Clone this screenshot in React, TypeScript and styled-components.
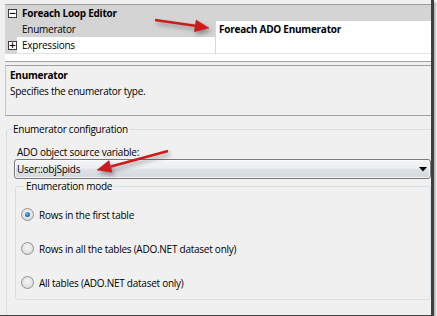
import * as React from 'react';
import styled, { createGlobalStyle, css } from 'styled-components';

const GlobalStyle = createGlobalStyle`
  html, body {
    margin: 0;
    padding: 0;
    background: #ffffff;
  }
  body {
    font-family: "Segoe UI", "Open Sans", "Liberation Sans", sans-serif;
    font-size: 10px;
    letter-spacing: -0.25px;
    color: #000000;
  }
`;

const modes = [
  { id: 'first', text: 'Rows in the first table', checked: true },
  { id: 'all', text: 'Rows in all the tables (ADO.NET dataset only)', checked: false },
  { id: 'tables', text: 'All tables (ADO.NET dataset only)', checked: false },
];

const App = () => {
  return (
    <>
      <GlobalStyle />
      <Frame>
        <PropertyGrid>
          <CategoryRow>
            <Gutter>
              <Expander>−</Expander>
            </Gutter>
            <CategoryTitle>Foreach Loop Editor</CategoryTitle>
          </CategoryRow>
          <GridRow>
            <Gutter />
            <LabelCell selected>Enumerator</LabelCell>
            <ValueCell bold>Foreach ADO Enumerator</ValueCell>
          </GridRow>
          <GridRow>
            <Gutter>
              <Expander>+</Expander>
            </Gutter>
            <LabelCell>Expressions</LabelCell>
            <ValueCell />
          </GridRow>
          <GridFiller />
        </PropertyGrid>

        <Description>
          <DescTitle>Enumerator</DescTitle>
          <DescText>Specifies the enumerator type.</DescText>
        </Description>

        <ConfigGroup>
          <ConfigLegend>Enumerator configuration</ConfigLegend>
          <FieldLabel>ADO object source variable:</FieldLabel>
          <ComboBox>
            <span>User::objSpids</span>
            <svg width="8" height="5" viewBox="0 0 8 5">
              <path d="M0 0 H8 L4 4.5 Z" fill="#000" />
            </svg>
          </ComboBox>
          <ModeGroup>
            <ModeLegend>Enumeration mode</ModeLegend>
            {modes.map((mode) => (
              <RadioRow key={mode.id}>
                <RadioDot checked={mode.checked} />
                <span>{mode.text}</span>
              </RadioRow>
            ))}
          </ModeGroup>
        </ConfigGroup>

        <Arrows width="437" height="316" viewBox="0 0 437 316">
          <g fill="#cc1b1b" stroke="#cc1b1b">
            <line x1="155" y1="20" x2="197" y2="26" strokeWidth="2.6" />
            <polygon points="209,28 196.1,20 194.3,31.8" strokeWidth="0.5" />
            <line x1="168" y1="151" x2="111" y2="166.4" strokeWidth="2.6" />
            <polygon points="97,170 112.1,172.2 109,160.6" strokeWidth="0.5" />
          </g>
        </Arrows>
      </Frame>
    </>
  );
};

const Frame = styled.div`
  position: relative;
  width: 431px;
  height: 311px;
  background: #f0f0f0;
  border-right: 3px solid #3f3f3f;
  border-bottom: 3px solid #3f3f3f;
  box-shadow: 2px 2px 2px rgba(0, 0, 0, 0.3);
  overflow: hidden;
  padding-top: 4px;
  box-sizing: content-box;
`;

const PropertyGrid = styled.div`
  margin-left: 5px;
  border-top: 1px solid #a0a0a0;
  border-bottom: 1px solid #a0a0a0;
  background: #ffffff;
`;

const rowBase = css`
  display: grid;
  grid-template-columns: 12px 198px 1fr;
  height: 16px;
  line-height: 16px;
`;

const CategoryRow = styled.div`
  display: flex;
  height: 16px;
  line-height: 16px;
  background: #d4d4d4;
`;

const GridRow = styled.div`
  ${rowBase}
`;

const Gutter = styled.div`
  width: 12px;
  background: #d4d4d4;
  display: flex;
  align-items: center;
  justify-content: center;
`;

const Expander = styled.span`
  display: flex;
  align-items: center;
  justify-content: center;
  width: 7px;
  height: 7px;
  border: 1px solid #3c3c3c;
  background: #ffffff;
  font-family: "DejaVu Sans", sans-serif;
  font-size: 9px;
  font-weight: bold;
  line-height: 7px;
  margin-left: 3px;
`;

const CategoryTitle = styled.span`
  font-weight: bold;
  padding-left: 5px;
`;

const LabelCell = styled.div<{ selected?: boolean }>`
  padding-left: 5px;
  background: ${(p) => (p.selected ? '#d4d4d4' : '#ffffff')};
  border-bottom: 1px solid #e4e4e4;
`;

const ValueCell = styled.div<{ bold?: boolean }>`
  padding-left: 3px;
  font-weight: ${(p) => (p.bold ? 'bold' : 'normal')};
  border-left: 1px solid #d8d8d8;
  border-bottom: 1px solid #e4e4e4;
  background: #ffffff;
`;

const GridFiller = styled.div`
  height: 8px;
  background: #ffffff;
`;

const Description = styled.div`
  margin: 3px 0 0 5px;
  height: 51px;
  border-top: 1px solid #a0a0a0;
  border-bottom: 1px solid #a0a0a0;
  border-left: 1px solid #c8c8c8;
  padding: 2px 0 0 4px;
  box-sizing: border-box;
`;

const DescTitle = styled.div`
  font-weight: bold;
  line-height: 15px;
`;

const DescText = styled.div`
  line-height: 17px;
`;

const ConfigGroup = styled.fieldset`
  margin: 6px 0 0 6px;
  width: 434px;
  height: 220px;
  box-sizing: border-box;
  border: 1px solid #d5dfe5;
  border-radius: 3px;
  padding: 8px 8px 0 7px;
`;

const ConfigLegend = styled.legend`
  margin-left: -3px;
  padding: 0 2px;
  line-height: 15px;
`;

const FieldLabel = styled.div`
  padding-left: 3px;
  line-height: 14px;
`;

const ComboBox = styled.div`
  display: flex;
  align-items: center;
  justify-content: space-between;
  height: 20px;
  box-sizing: border-box;
  padding: 0 3px 0 2px;
  border: 1px solid #7a7a7a;
  border-radius: 3px;
  background: linear-gradient(#f4f5f6 0%, #eceef0 45%, #dde2e7 52%, #d2d8de 100%);
  box-shadow: inset 0 0 0 1px rgba(255, 255, 255, 0.7);
`;

const ModeGroup = styled.fieldset`
  margin: 0 0 0 1px;
  height: 121px;
  box-sizing: border-box;
  border: 1px solid #d5dfe5;
  border-radius: 3px;
  padding: 13px 0 0 5px;
  display: flex;
  flex-direction: column;
  gap: 19px;
`;

const ModeLegend = styled.legend`
  margin-left: 3px;
  padding: 0 2px;
  line-height: 15px;
`;

const RadioRow = styled.label`
  display: flex;
  align-items: center;
  gap: 5px;
  height: 15px;
`;

const RadioDot = styled.span<{ checked?: boolean }>`
  position: relative;
  width: 11px;
  height: 11px;
  border-radius: 50%;
  border: 1px solid #939393;
  background: radial-gradient(circle at 50% 40%, #f6f6f6 0%, #e4e4e4 55%, #cfcfcf 100%);
  ${(p) =>
    p.checked &&
    css`
      &::after {
        content: '';
        position: absolute;
        left: 3px;
        top: 3px;
        width: 5px;
        height: 5px;
        border-radius: 50%;
        background: radial-gradient(circle at 40% 35%, #7ec4f2 0%, #1f6db4 55%, #0d3f75 100%);
      }
    `}
`;

const Arrows = styled.svg`
  position: absolute;
  left: 0;
  top: 0;
  pointer-events: none;
  filter: drop-shadow(2px 3px 2px rgba(0, 0, 0, 0.35));
`;

export default App;
